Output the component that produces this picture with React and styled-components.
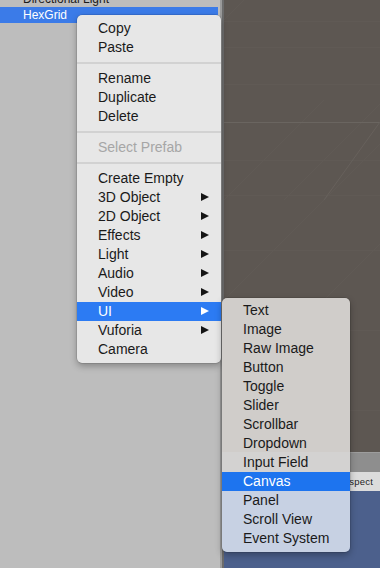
import React from "react";
import styled, { createGlobalStyle } from "styled-components";

const Global = createGlobalStyle`
  html, body { margin: 0; padding: 0; background: #bdbdbd; }
  body { overflow: hidden; }
  #root { width: 380px; height: 568px; }
`;

const Screen = styled.div`
  position: relative;
  width: 380px;
  height: 568px;
  display: flex;
  overflow: hidden;
  font-family: "Liberation Sans", Arial, sans-serif;
`;

const HierarchyPanel = styled.div`
  width: 220px;
  flex: none;
  background: #bdbdbd;
  display: flex;
  flex-direction: column;
  overflow: hidden;
`;

const HierarchyRow = styled.div`
  height: 16px;
  flex: none;
  line-height: 16px;
  padding-left: 23px;
  font-size: 12px;
  color: ${(p) => (p.$selected ? "#ffffff" : "#1a1a1a")};
  background: ${(p) => (p.$selected ? "#3b7be8" : "transparent")};
  margin-top: ${(p) => (p.$first ? "-9px" : "0")};
  margin-right: 2px;
`;

const Divider = styled.div`
  width: 4px;
  flex: none;
  background: linear-gradient(to right, #9a9a9a 0 2px, #6c6c6c 2px 4px);
`;

const RightColumn = styled.div`
  flex: 1;
  display: flex;
  flex-direction: column;
`;

const SceneView = styled.div`
  height: 452px;
  flex: none;
  background: #5d5752;
  overflow: hidden;
`;

const GameTabBar = styled.div`
  height: 20px;
  flex: none;
  background: #8e8e8e;
  border-top: 1px solid #9d9d9d;
  box-sizing: border-box;
`;

const GameToolbar = styled.div`
  height: 19px;
  flex: none;
  background: #dcdcdc;
  display: flex;
  align-items: center;
  justify-content: flex-end;
  padding-right: 7px;
  font-size: 9.5px;
  color: #1e1e1e;
  letter-spacing: 0.2px;
`;

const GameView = styled.div`
  flex: 1;
  background: #4c608c;
`;

const Menu = styled.div`
  position: absolute;
  left: ${(p) => p.$left}px;
  top: ${(p) => p.$top}px;
  width: ${(p) => p.$width}px;
  padding: ${(p) => p.$padTop}px 0 4px;
  border-radius: 5px;
  background: ${(p) => p.$bg};
  box-shadow: 0 3px 7px rgba(0, 0, 0, 0.3), 0 0 0 0.5px rgba(0, 0, 0, 0.18);
  overflow: hidden;
  font-size: 14px;
`;

const Item = styled.div`
  height: 19px;
  line-height: 19px;
  display: flex;
  align-items: center;
  justify-content: space-between;
  padding: 0 12px 0 21px;
  color: ${(p) => (p.$active ? "#ffffff" : p.$disabled ? "#a6a6a6" : "#1a1a1a")};
  background: ${(p) => (p.$active ? p.$activeBg : "transparent")};
  white-space: nowrap;
`;

const Arrow = styled.span`
  width: 0;
  height: 0;
  border-top: 4.5px solid transparent;
  border-bottom: 4.5px solid transparent;
  border-left: 8px solid ${(p) => (p.$light ? "#ffffff" : "#141414")};
`;

const Separator = styled.div`
  height: 12px;
  display: flex;
  align-items: center;
  &::after {
    content: "";
    flex: 1;
    height: 2px;
    background: #d2d2d2;
  }
`;

const mainItems = [
  { t: "Copy" },
  { t: "Paste" },
  { sep: true },
  { t: "Rename" },
  { t: "Duplicate" },
  { t: "Delete" },
  { sep: true },
  { t: "Select Prefab", disabled: true },
  { sep: true },
  { t: "Create Empty" },
  { t: "3D Object", sub: true },
  { t: "2D Object", sub: true },
  { t: "Effects", sub: true },
  { t: "Light", sub: true },
  { t: "Audio", sub: true },
  { t: "Video", sub: true },
  { t: "UI", sub: true, active: true },
  { t: "Vuforia", sub: true },
  { t: "Camera" },
];

const subItems = [
  "Text",
  "Image",
  "Raw Image",
  "Button",
  "Toggle",
  "Slider",
  "Scrollbar",
  "Dropdown",
  "Input Field",
  "Canvas",
  "Panel",
  "Scroll View",
  "Event System",
];

function SceneGrid() {
  return (
    <svg width="156" height="452" viewBox="0 0 156 452" style={{ display: "block" }}>
      <g stroke="#605a55" strokeWidth="1" fill="none">
        <line x1="0" y1="21.5" x2="156" y2="21.5" />
        <line x1="0" y1="47.5" x2="156" y2="47.5" />
        <line x1="0" y1="84.5" x2="156" y2="84.5" />
        <line x1="0" y1="160.5" x2="156" y2="160.5" />
        <line x1="0" y1="195.5" x2="156" y2="195.5" />
        <line x1="0" y1="250.5" x2="156" y2="250.5" />
        <line x1="0" y1="330.5" x2="156" y2="330.5" />
        <line x1="0" y1="410.5" x2="156" y2="410.5" />
        <line x1="0" y1="200" x2="100" y2="100" />
        <line x1="60" y1="200" x2="156" y2="104" />
        <line x1="0" y1="300" x2="156" y2="144" />
        <line x1="0" y1="400" x2="156" y2="244" />
        <line x1="0" y1="20" x2="20" y2="0" />
      </g>
      <line x1="0" y1="122.5" x2="156" y2="122.5" stroke="#6a6560" strokeWidth="1" />
      <line x1="156" y1="122" x2="100" y2="200" stroke="#67615c" strokeWidth="1" />
    </svg>
  );
}

export default function App() {
  return (
    <>
      <Global />
      <Screen>
        <HierarchyPanel>
          <HierarchyRow $first>Directional Light</HierarchyRow>
          <HierarchyRow $selected>HexGrid</HierarchyRow>
        </HierarchyPanel>
        <Divider />
        <RightColumn>
          <SceneView>
            <SceneGrid />
          </SceneView>
          <GameTabBar />
          <GameToolbar>Free Aspect</GameToolbar>
          <GameView />
        </RightColumn>

        <Menu $left={77} $top={15} $width={144} $padTop={3.5} $bg="#e7e7e7">
          {mainItems.map((it, i) =>
            it.sep ? (
              <Separator key={i} />
            ) : (
              <Item
                key={i}
                $active={it.active}
                $disabled={it.disabled}
                $activeBg="#2c7bf3"
              >
                <span>{it.t}</span>
                {it.sub && <Arrow $light={it.active} />}
              </Item>
            )
          )}
        </Menu>

        <Menu
          $left={222}
          $top={298}
          $width={128}
          $padTop={3}
          $bg="linear-gradient(to bottom, #d0cdca 0 154px, #d3d2d1 154px 174px, #d8d8d8 174px 193px, #c7d1e3 193px)"
        >
          {subItems.map((t) => (
            <Item key={t} $active={t === "Canvas"} $activeBg="#1d74ef">
              <span>{t}</span>
            </Item>
          ))}
        </Menu>
      </Screen>
    </>
  );
}
